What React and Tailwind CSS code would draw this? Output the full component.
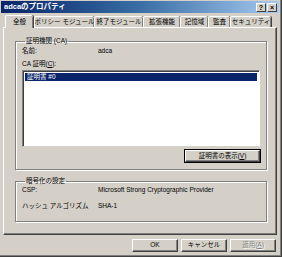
import React from 'react';

const jp = { fontFamily: '"Liberation Sans", "Noto Sans CJK JP", sans-serif' };

function Tab({ label, w, active }) {
  return (
    <div
      className={`relative flex items-center justify-center bg-[#d4d0c8] border-t border-l border-white rounded-t-[2px] shadow-[inset_-1px_0_0_#808080,1px_0_0_#404040] ${active ? 'h-[13px] -mb-[1px] z-10 mr-[1px]' : 'h-[11px] mt-[2px]'}`}
      style={{ width: w }}
    >
      <span className="text-[6.5px] leading-none text-black whitespace-nowrap">{label}</span>
    </div>
  );
}

function Btn({ children, className = '', disabled }) {
  return (
    <div className={`flex items-center justify-center bg-[#d4d0c8] border-t border-l border-white border-r border-b border-r-[#404040] border-b-[#404040] shadow-[inset_-1px_-1px_0_#808080] text-[6.5px] leading-none ${disabled ? 'text-[#808080] [text-shadow:1px_1px_0_#fff]' : 'text-black'} ${className}`}>
      {children}
    </div>
  );
}

function Group({ title, className = '', children }) {
  return (
    <fieldset className={`border border-[#808080] shadow-[1px_1px_0_#fff,inset_1px_1px_0_#fff] px-[6px] m-0 ${className}`}>
      <legend className="px-[1px] ml-[3px] text-[6.5px] leading-none text-black">{title}</legend>
      {children}
    </fieldset>
  );
}

export default function App() {
  return (
    <div className="w-[282px] h-[257px] bg-[#d4d0c8] border-r border-b border-[#404040] shadow-[inset_-1px_-1px_0_#808080] overflow-hidden relative" style={jp}>
      {/* title bar */}
      <div className="mt-[1px] ml-[1px] mr-[2px] h-[12px] flex items-center bg-gradient-to-r from-[#0a246a] via-[#3a6ea5] to-[#a6caf0] pl-[3px] pr-[2px]">
        <span className="text-white font-bold text-[7.5px] leading-none">adcaのプロパティ</span>
        <div className="ml-auto flex gap-[1px]">
          <div className="w-[10px] h-[9px] bg-[#d4d0c8] border-t border-l border-white border-r border-b border-r-[#404040] border-b-[#404040] flex items-center justify-center text-[7px] font-bold leading-none text-black">?</div>
          <div className="w-[10px] h-[9px] bg-[#d4d0c8] border-t border-l border-white border-r border-b border-r-[#404040] border-b-[#404040] flex items-center justify-center text-[7px] font-bold leading-none text-black">×</div>
        </div>
      </div>

      {/* tabs */}
      <div className="mt-[1px] ml-[5px] flex items-end h-[13px] relative z-10">
        <Tab label="全般" w={28} active />
        <Tab label="ポリシー モジュール" w={60} />
        <Tab label="終了モジュール" w={49} />
        <Tab label="拡張機能" w={37} />
        <Tab label="記憶域" w={28} />
        <Tab label="監査" w={22} />
        <Tab label="セキュリティ" w={41} />
      </div>

      {/* panel */}
      <div className="ml-[3px] w-[274px] h-[208px] border-t border-l border-white border-r border-b border-r-[#404040] border-b-[#404040] shadow-[inset_-1px_-1px_0_#808080] pl-[11px] pr-[9px] pt-[10px] flex flex-col">
        <Group title="証明機関 (CA)" className="h-[132px] pt-[2px]">
          <div className="flex items-center h-[10px] text-[6.5px] leading-none text-black">
            <span className="w-[76px]">名前:</span>
            <span>adca</span>
          </div>
          <div className="mt-[4px] text-[6.5px] leading-none text-black">CA 証明(<span className="underline">C</span>):</div>
          <div className="mt-[3px] h-[77px] bg-white border-t border-l border-[#808080] border-r border-b border-r-white border-b-[#d4d0c8] shadow-[inset_1px_1px_0_#404040] p-[2px]">
            <div className="h-[8px] bg-[#0a246a] flex items-center pl-[2px] text-white text-[6.5px] leading-none">証明書 #0</div>
          </div>
          <div className="flex justify-end mt-[3px]">
            <Btn className="w-[75px] h-[12px] outline outline-1 outline-black">証明書の表示(<span className="underline">V</span>)</Btn>
          </div>
        </Group>
        <Group title="暗号化の設定" className="mt-[8px] h-[44px] pt-[1px]">
          <div className="flex items-center h-[10px] text-[6.5px] leading-none text-black">
            <span className="w-[76px]">CSP:</span>
            <span>Microsoft Strong Cryptographic Provider</span>
          </div>
          <div className="flex items-center h-[10px] mt-[6px] text-[6.5px] leading-none text-black">
            <span className="w-[76px]">ハッシュ アルゴリズム</span>
            <span>SHA-1</span>
          </div>
        </Group>
      </div>

      {/* bottom buttons */}
      <div className="flex justify-end gap-[3px] mt-[4px] pr-[5px]">
        <Btn className="w-[46px] h-[13px]">OK</Btn>
        <Btn className="w-[46px] h-[13px]">キャンセル</Btn>
        <Btn className="w-[46px] h-[13px]" disabled>適用(<span className="underline">A</span>)</Btn>
      </div>
    </div>
  );
}
